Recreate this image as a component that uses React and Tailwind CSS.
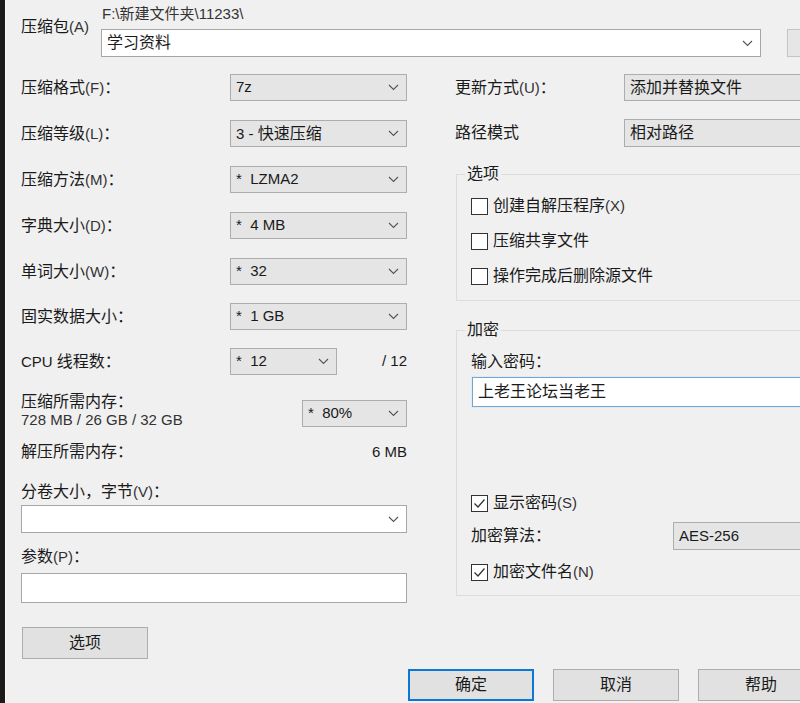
import clsx from "clsx";

// 7-Zip "添加到压缩包" dialog

const Chevron = () => (
  <svg width="11" height="7" viewBox="0 0 11 7" className="shrink-0">
    <path d="M1 1l4.5 4.5L10 1" fill="none" stroke="#555" strokeWidth="1.1" />
  </svg>
);

const Key = ({ k }) => <span className="text-[15px] text-[#333]">({k})</span>;

function Select({ value, className, white }) {
  return (
    <div
      className={clsx(
        "flex shrink-0 items-center justify-between border pl-[5px] pr-[7px]",
        white ? "border-[#a6a6a6] bg-white" : "border-[#adadad] bg-[#e5e5e5]",
        className
      )}
    >
      <span className="truncate whitespace-pre text-[15px]">{value}</span>
      <Chevron />
    </div>
  );
}

function Row({ label, value, className }) {
  return (
    <div className={clsx("flex items-center justify-between", className)}>
      <span className="leading-[22px]">{label}</span>
      <Select value={value} className="h-[27px] w-[177px]" />
    </div>
  );
}

function Check({ checked, children, className }) {
  return (
    <div className={clsx("flex h-[22px] items-center gap-[5px]", className)}>
      <span className="flex h-[17px] w-[17px] items-center justify-center border border-[#333] bg-white">
        {checked && (
          <svg width="13" height="11" viewBox="0 0 13 11">
            <path d="M1.5 5.5l3.5 3.5L11.5 1.5" fill="none" stroke="#333" strokeWidth="1.3" />
          </svg>
        )}
      </span>
      <span className="leading-[22px]">{children}</span>
    </div>
  );
}

const Btn = ({ children, focused, className }) => (
  <button
    className={clsx(
      "h-[32px] w-[126px] shrink-0 bg-[#e1e1e1] text-[16px]",
      focused ? "border-2 border-[#0a78d4]" : "border border-[#adadad]",
      className
    )}
  >
    {children}
  </button>
);

export default function App() {
  return (
    <div className="flex h-[703px] w-[800px] overflow-hidden bg-[#1c1a18] font-['Liberation_Sans','Noto_Sans_CJK_SC',sans-serif] text-[16px] text-[#1a1a1a]">
      <div className="w-[5px] shrink-0" />
      <div className="w-[900px] shrink-0 border-l border-[#fafafa] bg-[#f0f0f0] pl-[15px]">
        {/* archive name */}
        <div className="flex">
          <span className="mt-[16px] w-[80px] shrink-0 leading-[22px]">
            压缩包<Key k="A" />
          </span>
          <div className="flex flex-col pt-[3px]">
            <span className="pl-[1px] text-[15px] leading-[22px] text-[#333]">F:\新建文件夹\11233\</span>
            <Select value={<span className="text-[16px]">学习资料</span>} white className="mt-[4px] h-[28px] w-[660px]" />
          </div>
          <button className="ml-[26px] mt-[29px] h-[28px] w-[60px] shrink-0 border border-[#c4c4c4] bg-[#e6e6e6]" />
        </div>

        <div className="flex">
          {/* left column */}
          <div className="flex w-[386px] shrink-0 flex-col">
            <Row className="mt-[17px]" label={<>压缩格式<Key k="F" />：</>} value="7z" />
            <Row className="mt-[19px]" label={<>压缩等级<Key k="L" />：</>} value={<>3 - <span className="text-[16px]">快速压缩</span></>} />
            <Row className="mt-[19px]" label={<>压缩方法<Key k="M" />：</>} value="*  LZMA2" />
            <Row className="mt-[19px]" label={<>字典大小<Key k="D" />：</>} value="*  4 MB" />
            <Row className="mt-[19px]" label={<>单词大小<Key k="W" />：</>} value="*  32" />
            <Row className="mt-[18px]" label="固实数据大小：" value="*  1 GB" />

            <div className="mt-[18px] flex h-[27px] items-center">
              <span className="w-[209px] shrink-0 leading-[22px]">
                <span className="text-[15px]">CPU </span>线程数：
              </span>
              <Select value="*  12" className="h-[27px] w-[107px]" />
              <span className="ml-auto text-[15px]">/ 12</span>
            </div>

            <div className="mt-[18px] flex items-start justify-between">
              <div className="flex flex-col">
                <span className="leading-[18px]">压缩所需内存：</span>
                <span className="text-[15px] leading-[18px] text-[#333]">728 MB / 26 GB / 32 GB</span>
              </div>
              <Select value="*  80%" className="mt-[7px] h-[27px] w-[105px]" />
            </div>

            <div className="mt-[12px] flex items-center justify-between leading-[22px]">
              <span>解压所需内存：</span>
              <span className="text-[15px]">6 MB</span>
            </div>

            <span className="mt-[18px] leading-[22px]">
              分卷大小，字节<Key k="V" />：
            </span>
            <Select value="" white className="mt-[2px] h-[28px] w-[386px]" />

            <span className="mt-[13px] leading-[22px]">
              参数<Key k="P" />：
            </span>
            <div className="mt-[5px] h-[30px] w-[386px] border border-[#a6a6a6] bg-white" />

            <Btn className="ml-[1px] mt-[24px]">选项</Btn>
          </div>

          {/* right column */}
          <div className="ml-[48px] flex w-[440px] shrink-0 flex-col">
            <div className="mt-[17px] flex h-[27px] items-center">
              <span className="w-[169px] shrink-0 leading-[22px]">
                更新方式<Key k="U" />：
              </span>
              <Select value={<span className="text-[16px]">添加并替换文件</span>} className="h-[27px] w-[240px]" />
            </div>
            <div className="mt-[18px] flex h-[28px] items-center">
              <span className="w-[169px] shrink-0 leading-[22px]">路径模式</span>
              <Select value={<span className="text-[16px]">相对路径</span>} className="h-[28px] w-[240px]" />
            </div>

            <fieldset className="ml-[1px] mt-[16px] border border-[#dcdcdc] pb-[13px] pl-[14px]">
              <legend className="-ml-[6px] px-[2px] leading-[22px]">选项</legend>
              <Check className="mt-[10px]">
                创建自解压程序<Key k="X" />
              </Check>
              <Check className="mt-[13px]">压缩共享文件</Check>
              <Check className="mt-[13px]">操作完成后删除源文件</Check>
            </fieldset>

            <fieldset className="ml-[1px] mt-[18px] border border-[#dcdcdc] pb-[12px] pl-[14px]">
              <legend className="-ml-[6px] px-[2px] leading-[22px]">加密</legend>
              <span className="mt-[10px] block leading-[22px]">输入密码：</span>
              <div className="ml-[1px] mt-[4px] flex h-[30px] items-center border border-[#7aa2cc] bg-white pl-[5px] shadow-[0_0_0_1px_#d8eefb]">
                上老王论坛当老王
              </div>
              <Check checked className="mt-[85px]">
                显示密码<Key k="S" />
              </Check>
              <div className="mt-[8px] flex h-[28px] items-center">
                <span className="w-[202px] shrink-0 leading-[22px]">加密算法：</span>
                <Select value="AES-256" className="h-[28px] w-[180px]" />
              </div>
              <Check checked className="mt-[11px]">
                加密文件名<Key k="N" />
              </Check>
            </fieldset>
          </div>
        </div>

        {/* dialog buttons */}
        <div className="mt-[10px] flex gap-[19px] pl-[387px]">
          <Btn focused>确定</Btn>
          <Btn>取消</Btn>
          <Btn>帮助</Btn>
        </div>
      </div>
    </div>
  );
}
